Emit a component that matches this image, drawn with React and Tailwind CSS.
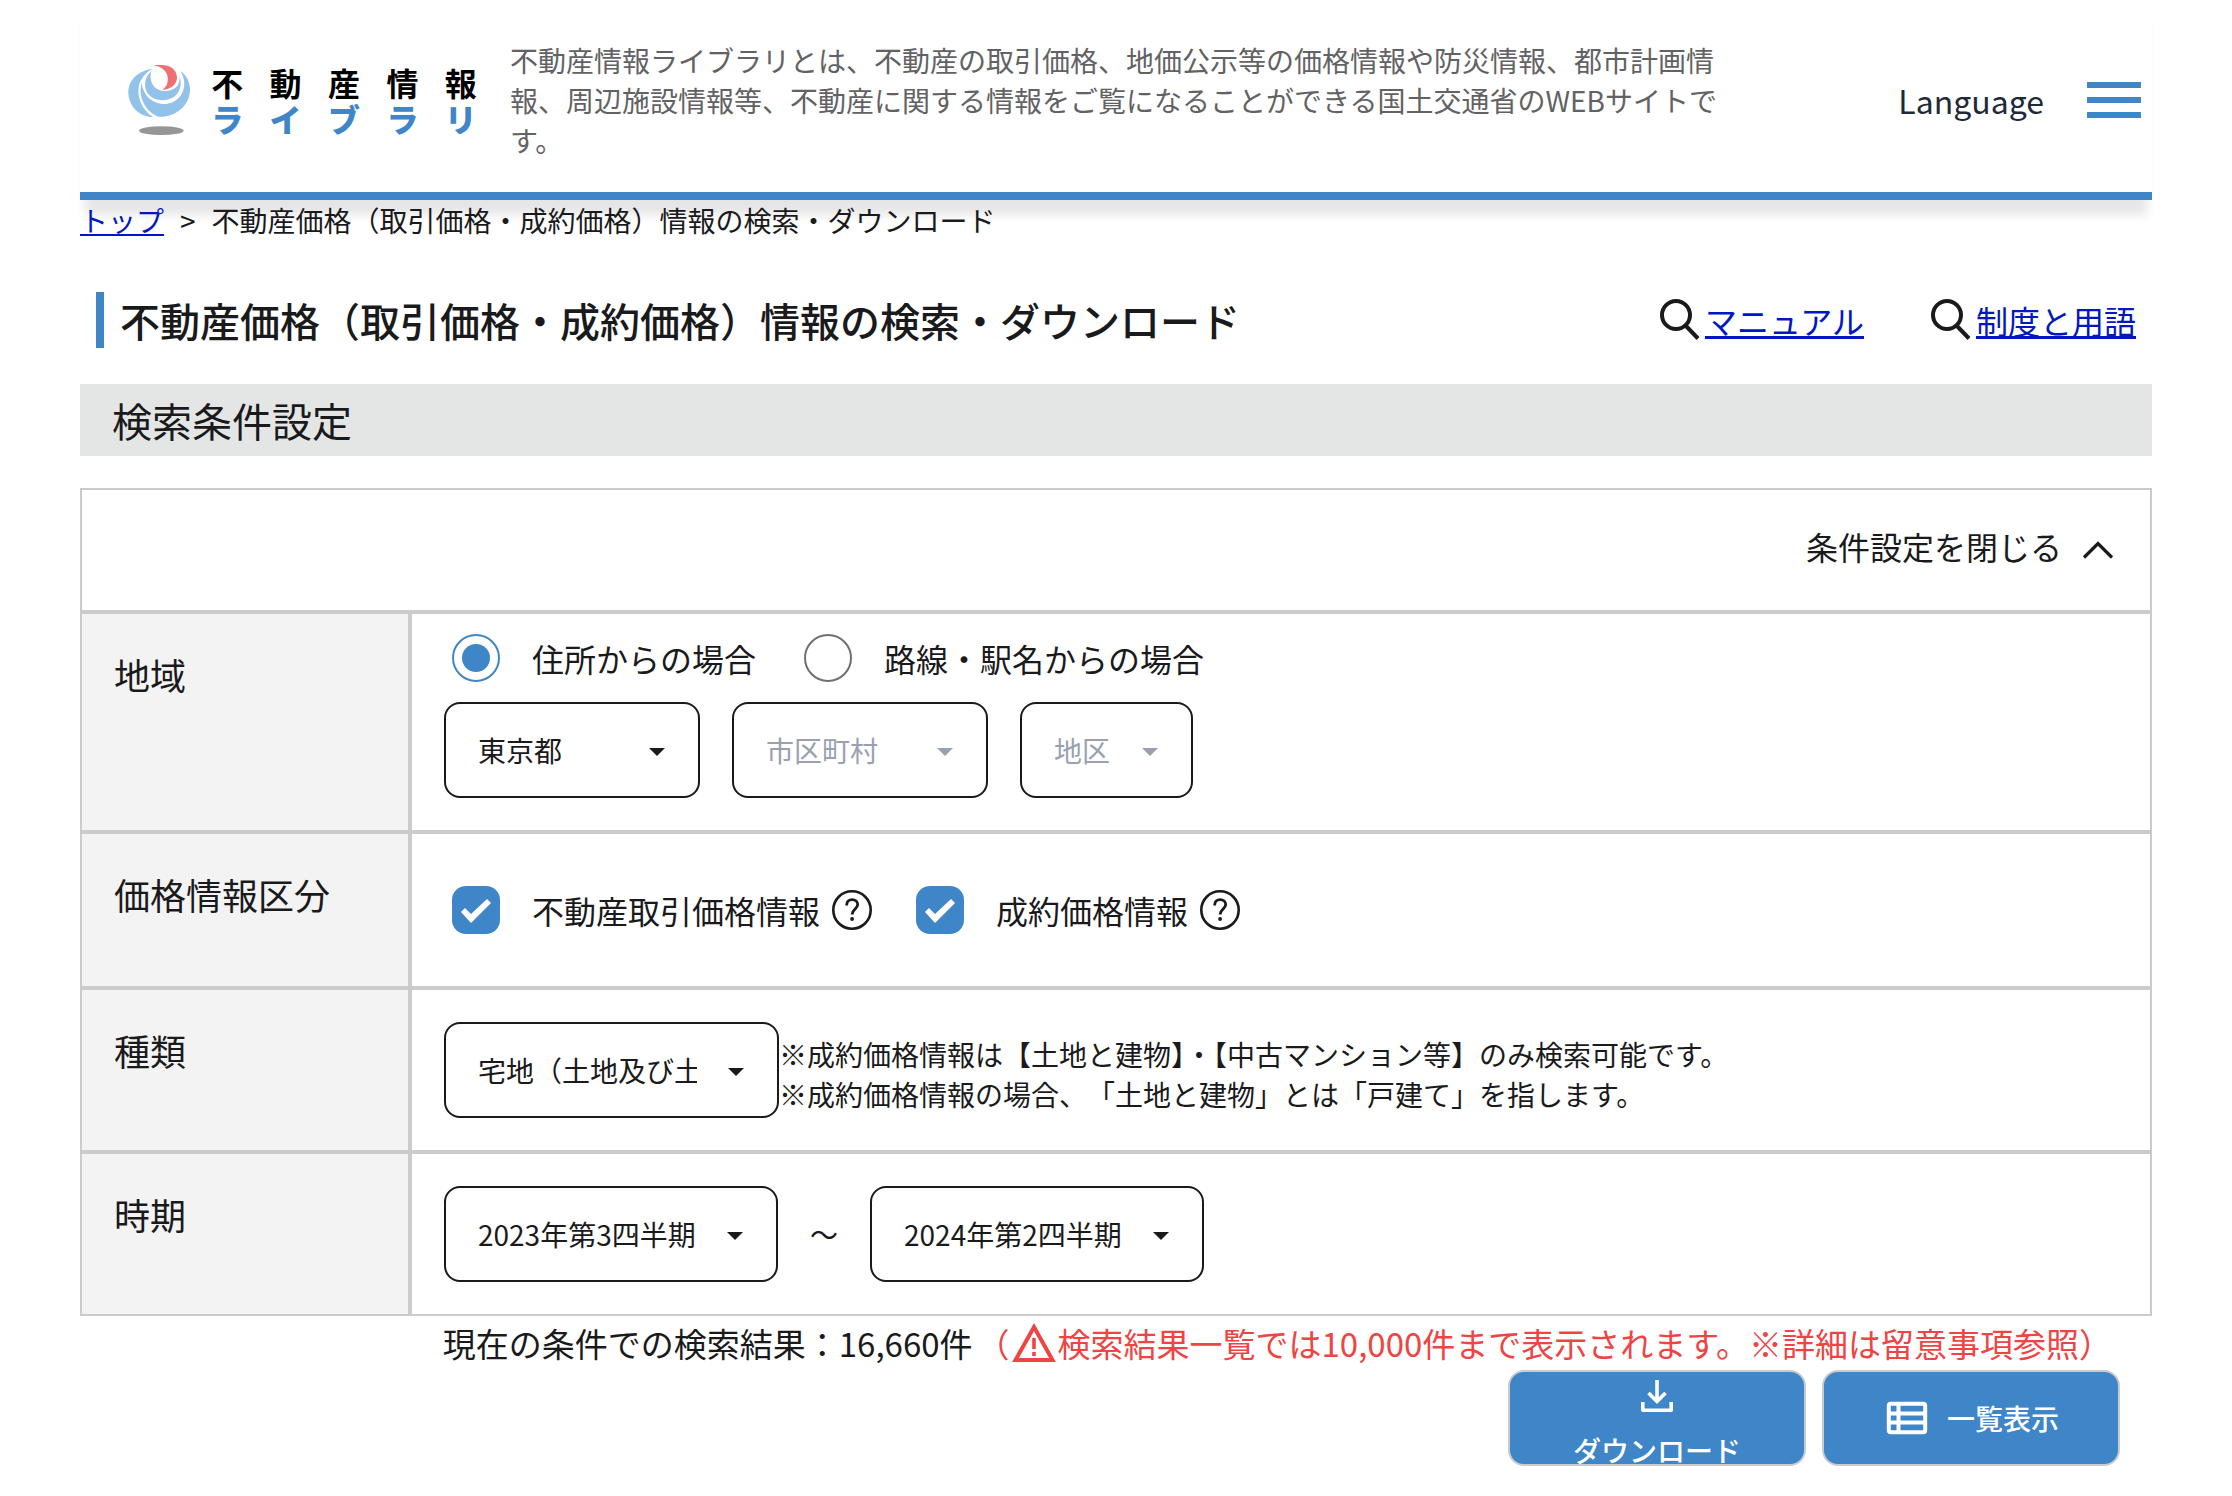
import React, { useState } from 'react';

const SiteLogo = () => {
    return (
        <a href="#" aria-label="不動産情報ライブラリ" className="flex shrink-0 items-center gap-2">
            <svg viewBox="27 30 186 210" className="h-[70px] w-[62px]" aria-hidden="true">
                <path fill="#92c1e9" d="M100 41C52 48 27 80 28 114C30 156 62 186 102 186C70 165 52 128 60 90C66 70 80 52 100 41Z" />
                <path fill="#92c1e9" d="M68 84C57 122 76 168 118 185C168 188 213 152 213 104C213 80 202 60 184 48C196 66 200 90 191 110C181 136 156 148 130 147C98 144 72 120 68 84Z" />
                <path fill="#92c1e9" d="M97 48C76 66 72 96 88 118C104 138 140 142 164 126C184 112 190 88 181 62C186 92 164 108 138 108C106 108 88 80 97 48Z" />
                <path fill="#f06f75" d="M105 31C130 36 144 50 146 66C148 84 142 96 130 105C158 103 175 86 174 66C172 44 156 32 132 30L106 30Z" />
                <ellipse cx="127" cy="227" rx="67" ry="13" fill="#969696" />
            </svg>
            <div className="w-[292px]" aria-hidden="true">
                <div className="grid grid-cols-5 text-center text-[32px] leading-9 font-bold text-black">
                    <span>不</span><span>動</span><span>産</span><span>情</span><span>報</span>
                </div>
                <div className="grid grid-cols-5 text-center text-[32px] leading-9 font-black text-[#3f86c8]">
                    <span>ラ</span><span>イ</span><span>ブ</span><span>ラ</span><span>リ</span>
                </div>
            </div>
        </a>
    );
};

const SearchIcon = () => (
    <svg viewBox="1 0 48 48" className="size-12" fill="none" stroke="#1a1a1c" strokeWidth="4" aria-hidden="true">
        <circle cx="20" cy="19" r="14" />
        <path d="M29.5 29.5L42 42.5" />
    </svg>
);

const HelpIcon = () => (
    <svg viewBox="0 0 48 48" className="size-12" fill="none" stroke="#1a1a1c" aria-hidden="true">
        <circle cx="24" cy="24" r="18.7" strokeWidth="2.6" />
        <path strokeWidth="2.8" d="M18.6 19.4C18.6 15.6 21 13.6 24.1 13.6C27.4 13.6 29.7 15.6 29.7 18.6C29.7 22.8 24.1 23.2 24.1 28.4" />
        <circle cx="24.1" cy="33" r="1.9" fill="#1a1a1c" stroke="none" />
    </svg>
);

const SelectBox = ({ label, width, disabled, children, ...rest }) => {
    return (
        <div className="relative">
            <select
                aria-label={label}
                disabled={disabled}
                className={`h-24 appearance-none rounded-2xl border-2 border-[#1a1a1c] bg-white pr-20 pl-8 text-[28px] text-[#1a1a1c] disabled:text-gray-400 disabled:opacity-100 ${width || ''}`}
                {...rest}
            >
                {children}
            </select>
            <svg
                viewBox="0 0 16 8"
                className={`pointer-events-none absolute top-[46px] right-[35px] h-2 w-4 ${disabled ? 'text-gray-400' : 'text-[#1a1a1c]'}`}
                aria-hidden="true"
            >
                <path fill="currentColor" d="M0 0H16L8 8Z" />
            </svg>
        </div>
    );
};

const RadioOption = ({ label, ...rest }) => (
    <label className="flex items-center gap-8 pl-2 text-[32px] leading-[48px]">
        <input
            type="radio"
            name="area"
            className="size-12 appearance-none rounded-full border-2 border-[#6f6f72] bg-clip-content p-2 checked:border-[#3f86c8] checked:bg-[#3f86c8]"
            {...rest}
        />
        {label}
    </label>
);

const CheckOption = ({ label, help, ...rest }) => (
    <div className="flex items-center gap-2 pl-2">
        <label className="flex items-center gap-8 text-[32px] leading-[48px]">
            <span className="grid">
                <input
                    type="checkbox"
                    className="peer col-start-1 row-start-1 size-12 appearance-none rounded-[14px] border-2 border-[#6f6f72] checked:border-[#3f86c8] checked:bg-[#3f86c8]"
                    {...rest}
                />
                <svg viewBox="0 0 48 48" className="pointer-events-none invisible col-start-1 row-start-1 size-12 peer-checked:visible" aria-hidden="true">
                    <path fill="#fff" d="M9 26L13 22L19 28L35 13L39 17L19 37Z" />
                </svg>
            </span>
            {label}
        </label>
        <button type="button" aria-label={help}>
            <HelpIcon />
        </button>
    </div>
);

const FormRow = ({ title, className, children }) => (
    <div className="grid grid-cols-[330px_1fr]">
        <div className="border-2 border-[#cbcbcb] bg-[#f3f3f3] px-8 py-8 text-4xl leading-[56px]">
            {title}
        </div>
        <div className={`border-2 border-[#cbcbcb] px-8 ${className}`}>
            {children}
        </div>
    </div>
);

const App = () => {

    const [area, setArea] = useState("address");
    const [isOpen, setIsOpen] = useState(true);
    const [priceType, setPriceType] = useState({
        transaction: true,
        contract: true
    });

    // check box handler
    const handlePriceType = (event) => {
        setPriceType({ ...priceType, [event.target.name]: event.target.checked });
    }

    return (
        <div lang="ja" className="min-h-screen bg-white px-20 pb-7 font-['Noto_Sans_CJK_JP','Noto_Sans',sans-serif] text-[#1a1a1c]">
            <header className="flex items-center border-b-8 border-[#3f86c8] bg-white pt-10 pr-2 pb-8 pl-12 shadow-[0_20px_10px_-5px_rgba(0,0,0,0.1)]">
                <SiteLogo />
                <p className="mr-40 ml-5 flex-1 text-[28px] leading-10 text-[#626264]">
                    不動産情報ライブラリとは、不動産の取引価格、地価公示等の価格情報や防災情報、都市計画情報、周辺施設情報等、不動産に関する情報をご覧になることができる国土交通省のWEBサイトです。
                </p>
                <div className="flex shrink-0 items-center gap-10">
                    <button type="button" className="text-[32px] leading-[48px] text-gray-800">Language</button>
                    <button type="button" aria-label="メニュー">
                        <svg viewBox="0 0 60 48" className="h-12 w-[60px]" fill="#3f86c8" aria-hidden="true">
                            <path d="M3 6H57V12H3ZM3 21H57V27H3ZM3 36H57V42H3Z" />
                        </svg>
                    </button>
                </div>
            </header>

            <nav aria-label="パンくず" className="relative flex gap-4 text-[28px] leading-10">
                <a href="#" className="text-[#0017c1] underline">トップ</a>
                <span>&gt;</span>
                <span>不動産価格（取引価格・成約価格）情報の検索・ダウンロード</span>
            </nav>

            <div className="mt-[52px] flex items-center justify-between px-4">
                <h1 className="border-l-8 border-[#3f86c8] pl-4 text-[40px] leading-[56px] font-medium">
                    不動産価格（取引価格・成約価格）情報の検索・ダウンロード
                </h1>
                <div className="flex gap-16 text-[32px] leading-[48px]">
                    <div className="flex">
                        <SearchIcon />
                        <a href="#" className="text-[#0017c1] underline">マニュアル</a>
                    </div>
                    <div className="flex">
                        <SearchIcon />
                        <a href="#" className="text-[#0017c1] underline">制度と用語</a>
                    </div>
                </div>
            </div>

            <h2 className="mt-9 bg-[#e4e6e5] px-8 text-[40px] leading-[72px]">検索条件設定</h2>

            <section className="mt-8">
                <div className="flex justify-end border-2 border-[#cbcbcb] py-9 pr-7">
                    <button type="button" onClick={() => setIsOpen(!isOpen)} className="flex items-start gap-3 text-[32px] leading-10">
                        {isOpen ? "条件設定を閉じる" : "条件設定を開く"}
                        <svg viewBox="0 0 48 48" className={`size-12 ${isOpen ? '' : 'rotate-180'}`} fill="none" stroke="#1a1a1c" strokeWidth="3.2" aria-hidden="true">
                            <path d="M10 31.5L24 17.5L38 31.5" />
                        </svg>
                    </button>
                </div>

                {isOpen && (
                    <>
                        <FormRow title="地域" className="flex flex-col gap-5 pt-5 pb-8">
                            <div className="flex gap-10">
                                <RadioOption label="住所からの場合" checked={area === "address"} onChange={() => setArea("address")} />
                                <RadioOption label="路線・駅名からの場合" checked={area === "station"} onChange={() => setArea("station")} />
                            </div>
                            <div className="flex gap-8">
                                <SelectBox label="都道府県" width="w-64">
                                    <option>東京都</option>
                                    <option>大阪府</option>
                                </SelectBox>
                                <SelectBox label="市区町村" width="w-64" disabled>
                                    <option>市区町村</option>
                                </SelectBox>
                                <SelectBox label="地区" disabled>
                                    <option>地区</option>
                                </SelectBox>
                            </div>
                        </FormRow>

                        <FormRow title="価格情報区分" className="flex items-center gap-8 py-[52px]">
                            <CheckOption label="不動産取引価格情報" help="不動産取引価格情報の説明" name="transaction" checked={priceType.transaction} onChange={handlePriceType} />
                            <CheckOption label="成約価格情報" help="成約価格情報の説明" name="contract" checked={priceType.contract} onChange={handlePriceType} />
                        </FormRow>

                        <FormRow title="種類" className="flex items-center py-8">
                            <SelectBox label="種類" width="w-[335px]">
                                <option>宅地（土地及び土地と建物）</option>
                                <option>中古マンション等</option>
                            </SelectBox>
                            <div className="pt-2 text-[28px] leading-10">
                                <p>※成約価格情報は【土地と建物】・【中古マンション等】のみ検索可能です。</p>
                                <p className="[text-spacing-trim:space-all]">※成約価格情報の場合、「土地と建物」とは「戸建て」を指します。</p>
                            </div>
                        </FormRow>

                        <FormRow title="時期" className="flex items-center gap-8 py-8">
                            <SelectBox label="時期（開始）">
                                <option>2023年第3四半期</option>
                                <option>2023年第4四半期</option>
                            </SelectBox>
                            <span className="text-[28px]">～</span>
                            <SelectBox label="時期（終了）">
                                <option>2024年第2四半期</option>
                                <option>2024年第1四半期</option>
                            </SelectBox>
                        </FormRow>
                    </>
                )}
            </section>

            <div className="flex items-center justify-end gap-1 py-[3px] pr-10 text-[33px] leading-[48px]">
                <span>現在の条件での検索結果：16,660件</span>
                <span className="flex items-center text-[#ef4444]">
                    （
                    <svg viewBox="0 0 48 48" className="size-12" fill="none" stroke="#ef4444" aria-hidden="true">
                        <path strokeWidth="4" d="M24 8L42.5 41H5.5Z" />
                        <path strokeWidth="3.6" d="M24 19V30M24 33V37" />
                    </svg>
                    検索結果一覧では10,000件まで表示されます。※詳細は留意事項参照）
                </span>
            </div>

            <div className="flex justify-end gap-4 pr-8 text-[28px] font-medium text-white">
                <button type="button" className="flex h-24 w-[298px] flex-col items-center overflow-hidden rounded-2xl border-2 border-[#cbcbcb] bg-[#3f86c8]">
                    <svg viewBox="0 0 48 48" className="size-12 shrink-0" fill="none" stroke="currentColor" strokeWidth="3.6" aria-hidden="true">
                        <path d="M24 8V29M15.5 21L24 29.5L32.5 21" />
                        <path strokeLinejoin="round" d="M9.8 30V38.2H38.2V30" />
                    </svg>
                    <span className="leading-[60px]">ダウンロード</span>
                </button>
                <button type="button" className="flex h-24 w-[298px] items-center justify-center gap-4 rounded-2xl border-2 border-[#cbcbcb] bg-[#3f86c8]">
                    <svg viewBox="0 0 48 48" className="size-12" fill="none" stroke="currentColor" strokeWidth="4" aria-hidden="true">
                        <rect x="5.8" y="9.8" width="36.4" height="28.4" rx="2" />
                        <path d="M15.5 10V38M6 19.5H42M6 28.5H42" />
                    </svg>
                    一覧表示
                </button>
            </div>
        </div>
    );
};

export default App;
